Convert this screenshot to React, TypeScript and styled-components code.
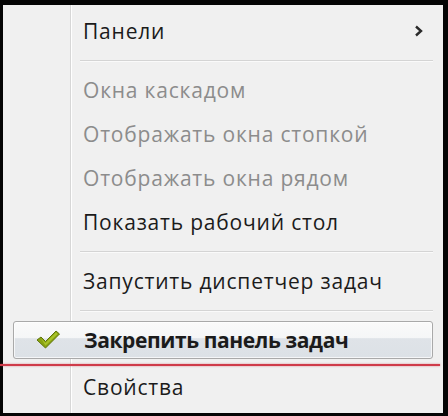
import { FC } from 'react';
import styled, { createGlobalStyle, css } from 'styled-components';

const GlobalStyle = createGlobalStyle`
  html, body {
    margin: 0;
    padding: 0;
    background: #050505;
  }
  body {
    width: 448px;
    height: 416px;
    overflow: hidden;
    font-family: 'Open Sans', 'Noto Sans', 'DejaVu Sans', sans-serif;
  }
`;

const Screen = styled.div`
  position: relative;
  width: 448px;
  height: 416px;
  padding: 5px 5px 0 3px;
  box-sizing: border-box;
`;

const Menu = styled.div`
  display: flex;
  flex-direction: column;
  width: 440px;
  height: 408px;
  box-sizing: border-box;
  padding-top: 4px;
  background:
    linear-gradient(
      to right,
      transparent 67px,
      #d7d7d7 67px,
      #d7d7d7 68px,
      #ffffff 68px,
      #ffffff 69px,
      transparent 69px
    ),
    #f0f0f0;
`;

const Item = styled.div<{ $active?: boolean }>`
  display: grid;
  grid-template-columns: 80px 1fr 40px;
  align-items: center;
  height: 44px;
  flex-shrink: 0;

  ${({ $active }) =>
    $active &&
    css`
      margin: 3px 10px 6px 10px;
      height: 38px;
      grid-template-columns: 70px 1fr 30px;
      border: 1px solid #a9a9a9;
      border-radius: 3px;
      box-sizing: border-box;
      background: linear-gradient(
        to bottom,
        #fafafa 0%,
        #f5f6f7 45%,
        #dfe3e8 46%,
        #dce1e6 100%
      );
      box-shadow: inset 0 0 0 1px rgba(255, 255, 255, 0.7);
    `}
`;

const Icon = styled.div`
  display: flex;
  align-items: center;
  justify-content: center;
  padding-right: 2px;
`;

const Label = styled.span<{ $disabled?: boolean; $bold?: boolean }>`
  font-size: 21px;
  letter-spacing: ${({ $bold }) => ($bold ? '-0.4px' : '0.8px')};
  white-space: nowrap;
  color: ${({ $disabled }) => ($disabled ? '#8c8c8c' : '#1b1b1b')};
  font-weight: ${({ $bold }) => ($bold ? 700 : 400)};
`;

const Arrow = styled.div`
  display: flex;
  align-items: center;
  padding-left: 11px;
`;

const Separator = styled.div`
  height: 15px;
  flex-shrink: 0;
  display: flex;
  align-items: center;
  padding: 0 10px 0 77px;

  &::after {
    content: '';
    flex: 1;
    height: 1px;
    background: #d4d4d4;
    box-shadow: 0 1px 0 #fafafa;
  }
`;

const RedMark = styled.div`
  position: absolute;
  left: 0;
  top: 364px;
  width: 440px;
  height: 2px;
  background: #cf3b4a;
  box-shadow: 0 0 2px rgba(207, 59, 74, 0.6);
`;

const Chevron: FC = () => (
  <svg width="10" height="12" viewBox="0 0 10 12">
    <path
      d="M2 1.5 L7 6 L2 10.5"
      fill="none"
      stroke="#2a2a2a"
      strokeWidth="2.4"
      strokeLinejoin="miter"
    />
  </svg>
);

const Check: FC = () => (
  <svg width="26" height="22" viewBox="0 0 26 22">
    <path
      d="M2 11 L6 8 L10.5 12.5 L21 2 L24.5 5 L10.5 19 Z"
      fill="#8aa312"
      stroke="#5f7508"
      strokeWidth="1"
      strokeLinejoin="round"
    />
    <path d="M6 9.5 L10.5 14 L21 3.6 L22.6 5 L10.5 16.5 Z" fill="#a9c42a" />
  </svg>
);

type Entry =
  | { kind: 'sep' }
  | { kind: 'item'; text: string; disabled?: boolean; submenu?: boolean; checked?: boolean };

const entries: Entry[] = [
  { kind: 'item', text: 'Панели', submenu: true },
  { kind: 'sep' },
  { kind: 'item', text: 'Окна каскадом', disabled: true },
  { kind: 'item', text: 'Отображать окна стопкой', disabled: true },
  { kind: 'item', text: 'Отображать окна рядом', disabled: true },
  { kind: 'item', text: 'Показать рабочий стол' },
  { kind: 'sep' },
  { kind: 'item', text: 'Запустить диспетчер задач' },
  { kind: 'sep' },
  { kind: 'item', text: 'Закрепить панель задач', checked: true },
  { kind: 'item', text: 'Свойства' },
];

export default function App() {
  return (
    <>
      <GlobalStyle />
      <Screen>
        <Menu>
          {entries.map((entry, i) =>
            entry.kind === 'sep' ? (
              <Separator key={i} />
            ) : (
              <Item key={i} $active={entry.checked}>
                <Icon>{entry.checked && <Check />}</Icon>
                <Label $disabled={entry.disabled} $bold={entry.checked}>
                  {entry.text}
                </Label>
                <Arrow>{entry.submenu && <Chevron />}</Arrow>
              </Item>
            ),
          )}
        </Menu>
        <RedMark />
      </Screen>
    </>
  );
}
